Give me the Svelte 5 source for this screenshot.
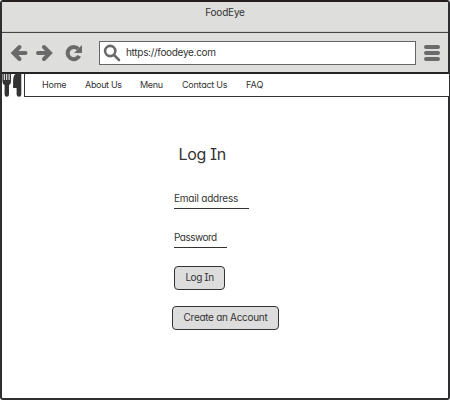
<script>
  const links = [
    { label: 'Home', width: 43, spacing: -0.2 },
    { label: 'About Us', width: 55, spacing: -0.33 },
    { label: 'Menu', width: 42, spacing: -0.3 },
    { label: 'Contact Us', width: 64, spacing: -0.25 },
    { label: 'FAQ', width: 30, spacing: 0 }
  ];
</script>

<div class="window">
  <header class="title">FoodEye</header>
  <div class="toolbar">
    <svg class="back" width="18" height="18" viewBox="0 0 18 18"><path d="M9.500 3 3.500 9l6 6M4 9h11.500" /></svg>
    <svg class="forward" width="18" height="18" viewBox="0 0 18 18"><path d="m9 3 6 6-6 6M14 9H3" /></svg>
    <svg class="reload" width="18" height="18" viewBox="0 0 18 18">
      <path d="M13.200 4.900A6.100 6.100 0 1 0 14.200 11.800" /><path class="solid" d="M17 1v8H9.200z" />
    </svg>
    <div class="address">
      <svg width="18" height="18" viewBox="0 0 18 18"><circle cx="7.200" cy="7" r="5.100" /><path d="m11 11 5 5" /></svg>
      <span>https://foodeye.com</span>
    </div>
    <div class="burger"><i></i><i></i><i></i></div>
  </div>
  <div class="navrow">
    <svg class="logo" width="22" height="24" viewBox="0 0 22 24">
      <path d="M.4 0h1.400v7h1V0h1.400v7h1V0h1.400v7h1V0H9v8.500Q9 11 7 12V21.500q0 2.300-2.200 2.300t-2.200-2.300V12Q.4 11 .4 8.500z" />
      <path d="M19.300 0v21.500q0 2.300-2.300 2.300t-2.400-2.300V15h-3.500V7.500q0-7.300 5.500-7.500z" />
    </svg>
    <nav>
      {#each links as link}
        <a href="#top" style="width: {link.width}px; letter-spacing: {link.spacing}px">{link.label}</a>
      {/each}
    </nav>
  </div>
  <main>
    <h1>Log In</h1>
    <div class="field email">Email address</div>
    <div class="field password">Password</div>
    <button class="login">Log In</button>
    <button class="create">Create an Account</button>
  </main>
</div>

<style>
  :global(body) { background: #fff; }
  .window {
    box-sizing: border-box;
    width: 450px;
    height: 400px;
    border: 2px solid #2e2d30;
    border-top-color: #231f20;
    border-radius: 3px;
    background: #fff;
    color: #333;
    font-family: Inter, "Liberation Sans", sans-serif;
    font-feature-settings: "cv11", "cv08";
    font-size: 10px;
    white-space: nowrap;
  }
  .title {
    height: 30px;
    box-sizing: border-box;
    border-bottom: 1px solid #cfcfcd;
    background: #dededc;
    line-height: 21px;
    letter-spacing: -.2px;
    text-align: center;
  }
  .toolbar {
    box-sizing: border-box;
    height: 42px;
    border-top: 1px solid #444;
    border-bottom: 2px solid #232326;
    background: #dededc;
    display: flex;
    align-items: center;
    padding: 0 8px 0;
  }
  .toolbar svg { flex: none; fill: none; stroke: #6a6a6a; stroke-width: 4; }
  .toolbar .back, .toolbar .forward { stroke-linecap: round; }
  .forward { margin-left: 7px; }
  .reload { margin-left: 12px; }
  .toolbar .reload path { stroke-width: 4; }
  .toolbar .reload .solid { fill: #6a6a6a; stroke: none; }
  .address {
    box-sizing: border-box;
    width: 317px;
    height: 24px;
    margin-left: 16px;
    border: 1px solid #666;
    background: #fff;
    display: flex;
    align-items: center;
    padding-left: 4px;
  }
  .toolbar .address svg { margin-left: -1px; stroke-width: 2.6; stroke-linecap: round; }
  .address span { margin: -2px 0 0 5px; line-height: 20px; letter-spacing: -.3px; }
  .burger { margin-left: 8px; display: flex; flex-direction: column; gap: 2px; }
  .burger i { width: 16px; height: 4px; border-radius: 2px; background: #6a6a6a; }
  .navrow { display: flex; height: 23px; width: 448px; }
  .logo { flex: none; fill: #333; margin-top: -1px; }
  nav {
    position: relative;
    box-sizing: border-box;
    width: 426px;
    flex: none;
    height: 23px;
    border: 1px solid #333;
    border-top: 0;
    background: #fff;
    display: flex;
    padding-left: 17px;
    font-size: 9px;
    line-height: 22px;
  }
  main { display: flex; flex-direction: column; align-items: flex-start; padding-left: 172px; }
  nav a { color: inherit; text-decoration: none; flex: none; }
  h1 { margin: 45px 0 0 4.5px; font-size: 16px; line-height: 24px; font-weight: 400; letter-spacing: -.35px; }
  .field { box-sizing: border-box; border-bottom: 1px solid #333; height: 21px; line-height: 20px; }
  .email { width: 75px; margin-top: 22px; letter-spacing: -.22px; }
  .password { width: 53px; margin-top: 18px; letter-spacing: -.5px; }
  nav { margin-right: -2px; }
  .navrow nav { width: 426px; }
  button {
    box-sizing: border-box;
    height: 24px;
    padding: 0;
    border: 1px solid #333;
    border-radius: 4px;
    background: #ddd;
    color: inherit;
    font: inherit;
    font-feature-settings: inherit;
    line-height: 20px;
  }
  .login { width: 51px; margin-top: 18px; padding-bottom: 2px; letter-spacing: -.45px; }
  .create { width: 107px; margin: 16px 0 0 -2px; padding-bottom: 2px; letter-spacing: -.3px; }
</style>
